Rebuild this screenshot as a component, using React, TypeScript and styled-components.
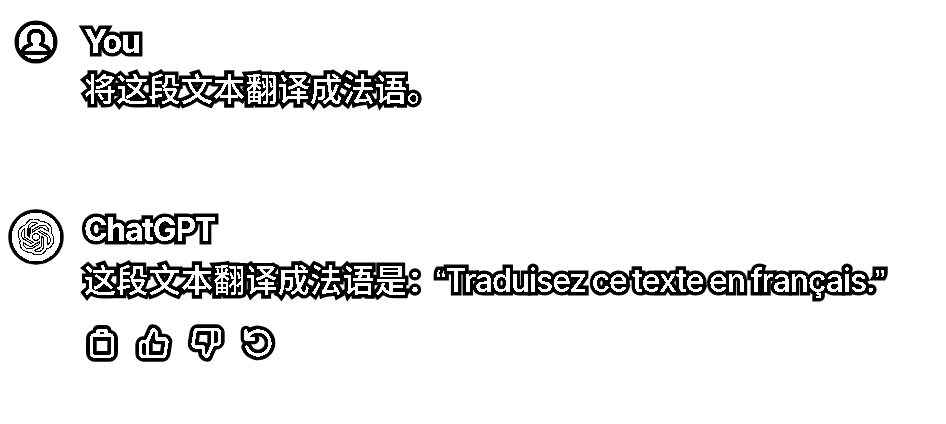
import styled, { createGlobalStyle } from 'styled-components';

const Global = createGlobalStyle`
  html, body { margin: 0; padding: 0; background: #fff; }
  body {
    width: 946px;
    height: 424px;
    overflow: hidden;
    font-family: Inter, "Noto Sans CJK SC", "Liberation Sans", sans-serif;
  }
`;

const Page = styled.main`
  display: flex;
  flex-direction: column;
  gap: 92px;
  padding-top: 20px;
  filter: url(#binarize);
`;

const Turn = styled.section`
  display: grid;
  grid-template-columns: 84px 1fr;
`;

const AvatarSlot = styled.div`
  display: flex;
  justify-content: center;
  padding-right: 12px;
`;

const Body = styled.div`
  display: flex;
  flex-direction: column;
`;

const Name = styled.div`
  font-size: 32px;
  font-weight: 700;
  line-height: 44px;
  letter-spacing: -1.3px;
  color: #fff;
  -webkit-text-stroke: 7px #000;
  paint-order: stroke fill;
`;

const Line = styled.div<{ $height: number }>`
  font-size: 32px;
  font-weight: 500;
  line-height: ${({ $height }) => $height}px;
  color: #fff;
  white-space: nowrap;
  letter-spacing: 0.3px;
  -webkit-text-stroke: 7px #000;
  paint-order: stroke fill;
`;

const Colon = styled.span`
  letter-spacing: -3px;
`;

const Latin = styled.span`
  letter-spacing: -1.05px;
  word-spacing: -2px;
`;

const Quote = styled.span`
  font-family: "Liberation Sans", sans-serif;
  letter-spacing: -1px;
`;

const Actions = styled.div`
  display: flex;
  gap: 20px;
  margin-top: 17px;
  padding-left: 2px;
`;

const Outline = styled.g`
  fill: none;
  stroke: #000;
  stroke-width: 8;
  stroke-linecap: round;
  stroke-linejoin: round;
`;

const Core = styled.g`
  fill: none;
  stroke: #fff;
  stroke-width: 2.500;
  stroke-linecap: round;
  stroke-linejoin: round;
`;

const ToolSvg = styled.svg`
  overflow: visible;
  flex: none;
`;

const ToolIcon = ({ d }: { d: string }) => (
  <ToolSvg width="32" height="32" viewBox="0 0 24 24">
    <Outline><path d={d} /></Outline>
    <Core><path d={d} /></Core>
  </ToolSvg>
);

const clipboard = 'M8.500 6H6.500A2.500 2.500 0 0 0 4 8.500v11A2.500 2.500 0 0 0 6.500 22h11a2.500 2.500 0 0 0 2.500-2.500v-11A2.500 2.500 0 0 0 17.500 6h-2M9 2.500h6v4H9z';
const thumbUp = 'M14 9V5a3 3 0 0 0-3-3l-4 9v11h11.300a2 2 0 0 0 2-1.700l1.400-9a2 2 0 0 0-2-2.300zM7 22H4a2 2 0 0 1-2-2v-7a2 2 0 0 1 2-2h3';
const thumbDown = 'M10 15v4a3 3 0 0 0 3 3l4-9V2H5.700a2 2 0 0 0-2 1.700l-1.400 9a2 2 0 0 0 2 2.300zM17 2h2.700a2.300 2.300 0 0 1 2.300 2v7a2.300 2.300 0 0 1-2.300 2H17';
const redo = 'M3 3v6h6M3.500 15a9 9 0 1 0 2.100-9.400L3 9';

const openai = 'M37.5324 16.8707C37.9808 15.5241 38.1363 14.0974 37.9886 12.6859C37.8409 11.2744 37.3934 9.91076 36.676 8.68622C35.6126 6.83404 33.9882 5.3676 32.0373 4.4985C30.0864 3.62941 27.9098 3.40259 25.8215 3.85078C24.8796 2.7893 23.7219 1.94125 22.4257 1.36341C21.1295 0.785575 19.7249 0.491269 18.3058 0.500197C16.1708 0.495044 14.0893 1.16803 12.3614 2.42214C10.6335 3.67624 9.34853 5.44666 8.6917 7.47815C7.30085 7.76286 5.98686 8.3414 4.8377 9.17505C3.68854 10.0087 2.73073 11.0782 2.02839 12.312C0.956464 14.1591 0.498905 16.2988 0.721698 18.4228C0.944492 20.5467 1.83612 22.5449 3.268 24.1293C2.81966 25.4759 2.66413 26.9026 2.81182 28.3141C2.95951 29.7256 3.40701 31.0892 4.12437 32.3138C5.18791 34.1659 6.8123 35.6322 8.76321 36.5013C10.7141 37.3704 12.8907 37.5973 14.9789 37.1492C15.9208 38.2107 17.0786 39.0587 18.3747 39.6366C19.6709 40.2144 21.0755 40.5087 22.4946 40.4998C24.6307 40.5054 26.7133 39.8321 28.4418 38.5772C30.1704 37.3223 31.4556 35.5506 32.1119 33.5179C33.5027 33.2332 34.8167 32.6547 35.9659 31.821C37.115 30.9874 38.0728 29.9178 38.7752 28.684C39.8458 26.8371 40.3023 24.6979 40.0789 22.5748C39.8556 20.4517 38.9639 18.4544 37.5324 16.8707ZM22.4978 37.8849C20.7443 37.8874 19.0459 37.2733 17.6994 36.1501C17.7601 36.117 17.8666 36.0586 17.936 36.0161L25.9004 31.4156C26.1003 31.3019 26.2663 31.137 26.3813 30.9378C26.4964 30.7386 26.5563 30.5124 26.5549 30.2825V19.0542L29.9213 20.998C29.9389 21.0068 29.9541 21.0198 29.9656 21.0359C29.977 21.052 29.9842 21.0707 29.9867 21.0902V30.3889C29.9842 32.375 29.1946 34.2791 27.7909 35.6841C26.3872 37.0892 24.4838 37.8806 22.4978 37.8849ZM6.39227 31.0064C5.51397 29.4888 5.19742 27.7107 5.49804 25.9832C5.55718 26.0187 5.66048 26.0818 5.73461 26.1244L13.699 30.7248C13.8975 30.8408 14.1233 30.902 14.3532 30.902C14.583 30.902 14.8088 30.8408 15.0073 30.7248L24.731 25.1103V28.9979C24.7321 29.0177 24.7283 29.0376 24.7199 29.0556C24.7115 29.0736 24.6988 29.0893 24.6829 29.1012L16.6317 33.7497C14.9096 34.7416 12.8643 35.0097 10.9447 34.4954C9.02506 33.9811 7.38785 32.7263 6.39227 31.0064ZM4.29707 13.6194C5.17156 12.0998 6.55279 10.9364 8.19885 10.3327C8.19885 10.4013 8.19491 10.5228 8.19491 10.6071V19.808C8.19351 20.0378 8.25334 20.2638 8.36823 20.4629C8.48312 20.6619 8.64893 20.8267 8.84863 20.9404L18.5723 26.5542L15.206 28.4979C15.1894 28.5089 15.1703 28.5155 15.1505 28.5173C15.1307 28.5191 15.1107 28.516 15.0924 28.5082L7.04046 23.8557C5.32135 22.8601 4.06716 21.2235 3.55289 19.3046C3.03862 17.3858 3.30624 15.3413 4.29707 13.6194ZM31.955 20.0556L22.2312 14.4411L25.5976 12.4981C25.6142 12.4872 25.6333 12.4805 25.6531 12.4787C25.6729 12.4769 25.6928 12.4801 25.7111 12.4879L33.7631 17.1364C34.9967 17.849 36.0017 18.8982 36.6606 20.1613C37.3194 21.4244 37.6047 22.849 37.4832 24.2684C37.3617 25.6878 36.8382 27.0432 35.9743 28.1759C35.1103 29.3086 33.9415 30.1717 32.6047 30.6641C32.6047 30.5947 32.6047 30.4733 32.6047 30.3889V21.188C32.6066 20.9586 32.5474 20.7328 32.4332 20.5338C32.319 20.3348 32.154 20.1698 31.955 20.0556ZM35.3055 15.0128C35.2464 14.9765 35.1431 14.9142 35.069 14.8717L27.1045 10.2712C26.906 10.1554 26.6803 10.0943 26.4504 10.0943C26.2206 10.0943 25.9948 10.1554 25.7963 10.2712L16.0726 15.8858V11.9982C16.0715 11.9783 16.0753 11.9585 16.0837 11.9405C16.0921 11.9225 16.1048 11.9068 16.1207 11.8949L24.1719 7.25025C25.4053 6.53903 26.8158 6.19376 28.2383 6.25482C29.6608 6.31589 31.0364 6.78077 32.2044 7.59508C33.3723 8.40939 34.2842 9.53945 34.8334 10.8531C35.3826 12.1667 35.5464 13.6095 35.3055 15.0128ZM14.2424 21.9419L10.8752 19.9981C10.8576 19.9893 10.8423 19.9763 10.8309 19.9602C10.8195 19.9441 10.8122 19.9254 10.8098 19.9058V10.6071C10.8107 9.18295 11.2173 7.78848 11.9819 6.58696C12.7466 5.38544 13.8377 4.42659 15.1275 3.82264C16.4173 3.21869 17.8524 2.99464 19.2649 3.1767C20.6775 3.35876 22.0089 3.93941 23.1034 4.85067C23.0427 4.88379 22.937 4.94215 22.8668 4.98473L14.9024 9.58517C14.7025 9.69878 14.5366 9.86356 14.4215 10.0626C14.3065 10.2616 14.2466 10.4877 14.2479 10.7175L14.2424 21.9419ZM16.071 17.9991L20.4018 15.4978L24.7325 17.9975V22.9985L20.4018 25.4983L16.071 22.9985V17.9991Z';

const UserAvatar = () => (
  <svg width="44" height="44" viewBox="0 0 44 44">
    <circle cx="22" cy="22" r="19.500" fill="#fff" stroke="#000" strokeWidth="4" />
    <path d="M22 10.500c-4 0-7.500 3-7.500 7.500 0 3 1.200 5 2.500 6.500-5 1-8 4-8.500 8.500h27c-.5-4.500-3.500-7.500-8.500-8.500 1.300-1.500 2.500-3.500 2.500-6.500 0-4.500-3.500-7.500-7.500-7.500z" fill="#fff" stroke="#000" strokeWidth="4" strokeLinejoin="round" />
  </svg>
);

const BotAvatar = () => (
  <svg width="58" height="58" viewBox="0 0 58 58">
    <circle cx="29" cy="29" r="26" fill="#fff" stroke="#000" strokeWidth="3.500" />
    <svg x="11" y="11" width="36" height="36" viewBox="0 0 41 41">
      <path d={openai} fill="#fff" stroke="#000" strokeWidth="2.400" paintOrder="stroke" />
    </svg>
  </svg>
);

const FilterDefs = styled.svg`
  position: absolute;
  width: 0;
  height: 0;
`;

const App = () => (
  <>
    <Global />
    <FilterDefs aria-hidden="true">
      <filter id="binarize" colorInterpolationFilters="sRGB" x="0" y="0" width="100%" height="100%">
        <feComponentTransfer>
          <feFuncR type="discrete" tableValues="0 1" />
          <feFuncG type="discrete" tableValues="0 1" />
          <feFuncB type="discrete" tableValues="0 1" />
        </feComponentTransfer>
      </filter>
    </FilterDefs>
    <Page>
      <Turn>
        <AvatarSlot><UserAvatar /></AvatarSlot>
        <Body>
          <Name>You</Name>
          <Line $height={52}>将这段文本翻译成法语。</Line>
        </Body>
      </Turn>
      <Turn>
        <AvatarSlot><BotAvatar /></AvatarSlot>
        <Body>
          <Name>ChatGPT</Name>
          <Line $height={57}>这段文本翻译成法语是<Colon>：</Colon><Latin><Quote>“</Quote>Traduisez ce texte en français.<Quote>”</Quote></Latin></Line>
          <Actions>
            <ToolIcon d={clipboard} />
            <ToolIcon d={thumbUp} />
            <ToolIcon d={thumbDown} />
            <ToolIcon d={redo} />
          </Actions>
        </Body>
      </Turn>
    </Page>
  </>
);

export default App;
